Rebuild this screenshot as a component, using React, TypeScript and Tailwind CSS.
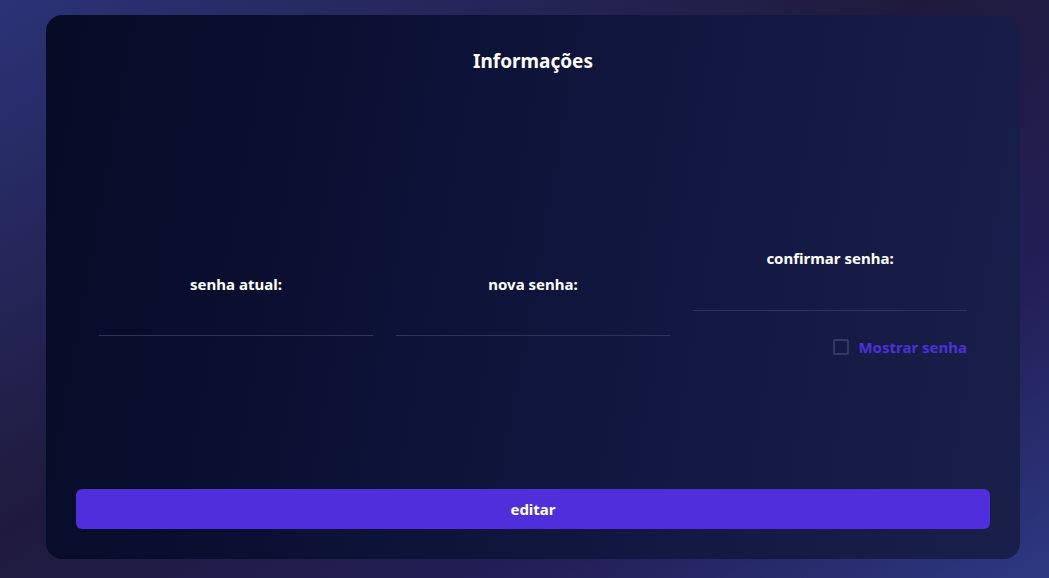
import React, { useState } from 'react';

const Field = ({ label }: { label: string }) => (
  <div className="flex flex-col items-center">
    <label className="text-[15px] font-bold text-white mb-[15px]">{label}</label>
    <input
      type="password"
      className="w-full h-[26px] bg-transparent border-b border-[#2f3358] outline-none text-white text-sm"
    />
  </div>
);

export default function App() {
  const [show, setShow] = useState(false);

  return (
    <div
      className="w-full h-[578px] pl-[46px] pr-[29px] pt-[15px] pb-[19px] bg-[linear-gradient(150deg,#2b3377_0%,#1f1a3d_45%,#231f58_75%,#2d3982_100%)]"
      style={{ fontFamily: '"Noto Sans", "Open Sans", sans-serif' }}
    >
      <div className="h-full rounded-2xl bg-[linear-gradient(100deg,#060b26_0%,#0d1238_40%,#131842_65%,#1a1f4a_100%)] flex flex-col px-[30px] pt-[33px] pb-[30px]">
        <h2 className="text-center text-[19px] leading-[26px] font-bold text-white">Informações</h2>

        <div className="flex-1 flex items-center px-[23px] pt-[46px]">
          <div className="grid grid-cols-3 gap-[23px] w-full items-center">
            <Field label="senha atual:" />
            <Field label="nova senha:" />
            <div className="flex flex-col">
              <Field label="confirmar senha:" />
              <label className="flex items-center justify-end gap-[9px] mt-[25px] mb-[4px] cursor-pointer">
                <input
                  type="checkbox"
                  checked={show}
                  onChange={() => setShow(!show)}
                  className="appearance-none w-4 h-4 rounded-[2px] border-2 border-[#343a60] bg-transparent"
                />
                <span className="text-[15px] leading-[22px] font-bold text-[#4f2fd6]">Mostrar senha</span>
              </label>
            </div>
          </div>
        </div>

        <button className="w-full h-[40px] rounded-md bg-[#4f2fdb] text-white text-[15px] font-bold">
          editar
        </button>
      </div>
    </div>
  );
}
